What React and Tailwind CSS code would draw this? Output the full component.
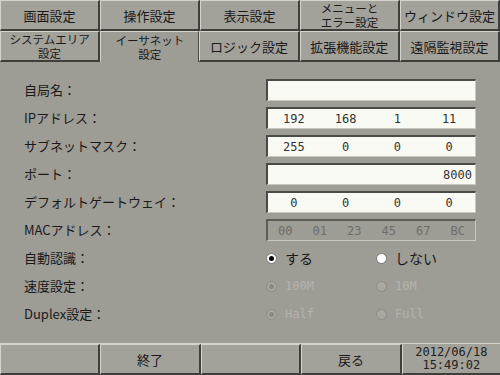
const jp = { fontFamily: '"Noto Sans CJK JP", "Noto Sans", sans-serif' }
const mono = { fontFamily: '"DejaVu Sans Mono", "Liberation Mono", monospace' }

const topTabs = ['画面設定', '操作設定', '表示設定', ['メニューと', 'エラー設定'], 'ウィンドウ設定']
const subTabs = [['システムエリア', '設定'], ['イーサネット', '設定'], 'ロジック設定', '拡張機能設定', '遠隔監視設定']

function Btn({ label, active, className = '' }) {
  const two = Array.isArray(label)
  return (
    <div
      className={
        'flex-1 flex flex-col items-center justify-center border-t border-l text-[#1a1a1a] whitespace-nowrap ' +
        (active
          ? 'bg-[#9d9c95] border-[#d4d3cc] border-r border-r-[#4b4b48] '
          : 'bg-[#a2a19a] border-[#d4d3cc] border-r-2 border-b-2 border-r-[#3e3e3b] border-b-[#3e3e3b] ') +
        className
      }
      style={jp}
    >
      {two ? (
        <span className="text-[11.5px] leading-[14px] text-center">
          {label[0]}
          <br />
          {label[1]}
        </span>
      ) : (
        <span className="text-[13px] leading-[15px]">{label}</span>
      )}
    </div>
  )
}

function Field({ values, cols, disabled, right }) {
  return (
    <div
      className={
        'w-[210px] h-[22px] border-t-2 border-l-2 border-b border-r flex items-center ' +
        (disabled
          ? 'bg-[#9d9c95] border-t-[#5c5c58] border-l-[#5c5c58] border-b-[#c8c7c0] border-r-[#c8c7c0] text-[#6e6e6a]'
          : 'bg-[#fafaf5] border-t-[#4a4a47] border-l-[#4a4a47] border-b-[#c8c7c0] border-r-[#c8c7c0] text-[#333]')
      }
    >
      {right ? (
        <span className="ml-auto pr-[3px] text-[12px]" style={mono}>{right}</span>
      ) : values ? (
        <div className={'grid w-full ' + cols}>
          {values.map((v, i) => (
            <span key={i} className="text-center text-[12px]" style={mono}>{v}</span>
          ))}
        </div>
      ) : null}
    </div>
  )
}

function Radio({ checked, disabled, label, font }) {
  return (
    <div className="flex items-center gap-[8px] w-[110px]">
      <span
        className={
          'w-[11px] h-[11px] rounded-full flex items-center justify-center border ' +
          (disabled ? 'bg-[#a8a7a0] border-[#8c8b85]' : 'bg-white border-[#777]')
        }
      >
        {checked && (
          <span className={'w-[5px] h-[5px] rounded-full ' + (disabled ? 'bg-[#8a8984]' : 'bg-black')} />
        )}
      </span>
      <span
        className={disabled ? 'text-[12px] text-[#b4b3ad]' : 'text-[14px] text-[#1a1a1a]'}
        style={font === 'mono' ? mono : jp}
      >
        {label}
      </span>
    </div>
  )
}

const rows = [
  ['自局名：', <Field />],
  ['IPアドレス：', <Field values={['192', '168', '1', '11']} cols="grid-cols-4" />],
  ['サブネットマスク：', <Field values={['255', '0', '0', '0']} cols="grid-cols-4" />],
  ['ポート：', <Field right="8000" />],
  ['デフォルトゲートウェイ：', <Field values={['0', '0', '0', '0']} cols="grid-cols-4" />],
  ['MACアドレス：', <Field disabled values={['00', '01', '23', '45', '67', 'BC']} cols="grid-cols-6" />],
  ['自動認識：', <div className="flex"><Radio checked label="する" /><Radio label="しない" /></div>],
  ['速度設定：', <div className="flex"><Radio checked disabled font="mono" label="100M" /><Radio disabled font="mono" label="10M" /></div>],
  ['Duplex設定：', <div className="flex"><Radio checked disabled font="mono" label="Half" /><Radio disabled font="mono" label="Full" /></div>],
]

export default function App() {
  return (
    <div className="w-[500px] h-[375px] bg-[#9d9c95] flex flex-col overflow-hidden">
      <div className="flex h-[31px]">
        {topTabs.map((t, i) => <Btn key={i} label={t} />)}
      </div>
      <div className="flex h-[31px]">
        {subTabs.map((t, i) => <Btn key={i} label={t} active={i === 1} />)}
      </div>
      <div className="flex-1 flex flex-col gap-[6px] pt-[17px] pl-[24px]">
        {rows.map(([label, ctl], i) => (
          <div key={i} className="flex items-center h-[22px]">
            <span className="w-[242px] text-[13px] text-[#1a1a1a]" style={jp}>{label}</span>
            {ctl}
          </div>
        ))}
      </div>
      <div className="flex h-[32px] border-t border-[#d4d3cc]">
        <Btn label="" />
        <Btn label="終了" />
        <Btn label="" />
        <Btn label="戻る" />
        <div className="flex-1 flex flex-col items-center justify-center border-l border-[#d4d3cc] border-b-2 border-b-[#3e3e3b] bg-[#a2a19a] text-[12px] leading-[13px] text-[#222]" style={mono}>
          <span>2012/06/18</span>
          <span>15:49:02</span>
        </div>
      </div>
    </div>
  )
}
